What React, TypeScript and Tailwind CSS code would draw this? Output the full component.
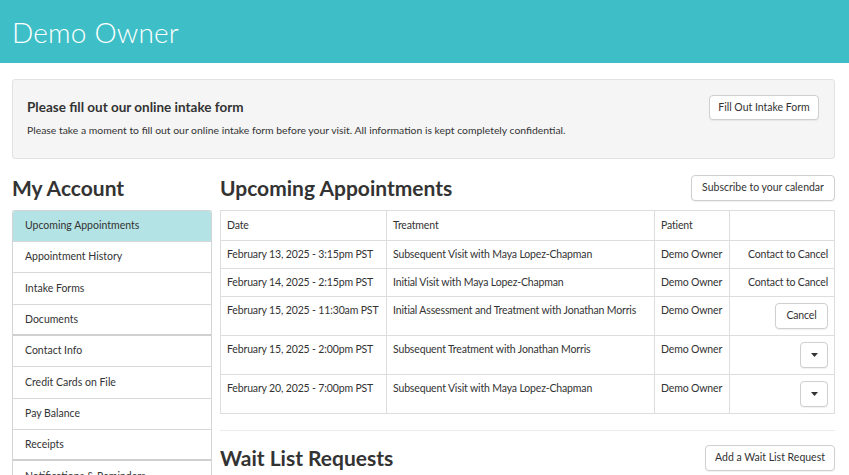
const menu = [
  { label: "Upcoming Appointments", active: true },
  { label: "Appointment History" },
  { label: "Intake Forms" },
  { label: "Documents", group: true },
  { label: "Contact Info" },
  { label: "Credit Cards on File" },
  { label: "Pay Balance" },
  { label: "Receipts", group: true },
  { label: "Notifications & Reminders" },
];

type Row = { date: string; treatment: string; action: "contact" | "cancel" | "menu" };

const rows: Row[] = [
  { date: "February 13, 2025 - 3:15pm PST", treatment: "Subsequent Visit with Maya Lopez-Chapman", action: "contact" },
  { date: "February 14, 2025 - 2:15pm PST", treatment: "Initial Visit with Maya Lopez-Chapman", action: "contact" },
  { date: "February 15, 2025 - 11:30am PST", treatment: "Initial Assessment and Treatment with Jonathan Morris", action: "cancel" },
  { date: "February 15, 2025 - 2:00pm PST", treatment: "Subsequent Treatment with Jonathan Morris", action: "menu" },
  { date: "February 20, 2025 - 7:00pm PST", treatment: "Subsequent Visit with Maya Lopez-Chapman", action: "menu" },
];

const btn =
  "rounded-[4px] border border-[#cfcfcf] bg-white text-[10.5px] text-[#333] shadow-[0_1px_1px_rgba(0,0,0,0.06)] whitespace-nowrap";

const cell = "border border-[#ddd] px-[6px] align-top whitespace-nowrap";

const ActionCell = ({ action }: { action: Row["action"] }) => {
  if (action === "contact") return <span className="block text-right">Contact to Cancel</span>;
  if (action === "cancel")
    return (
      <div className="flex justify-end">
        <button className={`${btn} h-[26px] w-[53px]`}>Cancel</button>
      </div>
    );
  return (
    <div className="flex justify-end">
      <button className={`${btn} flex h-[26px] w-[28px] items-center justify-center`}>
        <svg width="7" height="4" viewBox="0 0 7 4">
          <path d="M0 0h7L3.5 4z" fill="#333" />
        </svg>
      </button>
    </div>
  );
};

export default function App() {
  return (
    <div className="h-[475px] overflow-hidden bg-white text-[#333]" style={{ fontFamily: "Lato, 'Open Sans', sans-serif" }}>
      <header className="flex h-[63px] items-center bg-[#3ebfc7] pl-3">
        <h1 className="text-[28px] font-light tracking-[0.2px] text-white">Demo Owner</h1>
      </header>

      <div className="pl-3 pr-[14px] pt-4">
        <div className="flex items-start justify-between rounded-[3px] border border-[#e2e2e2] bg-[#f5f5f5] pl-[14px] pr-[15px] pt-[15px] pb-[19px]">
          <div className="pt-[2px]">
            <h2 className="text-[13.5px] font-bold text-[#333]">Please fill out our online intake form</h2>
            <p className="mt-[6px] text-[10.4px] text-[#333]">
              Please take a moment to fill out our online intake form before your visit. All information is kept completely confidential.
            </p>
          </div>
          <button className={`${btn} h-[25px] w-[110px]`}>Fill Out Intake Form</button>
        </div>

        <div className="mt-[16px] flex gap-2">
          <aside className="w-[200px] shrink-0">
            <h2 className="h-[31px] text-[21px] font-bold leading-[26px] text-[#333]">My Account</h2>
            <ul className="mt-[4px] overflow-hidden rounded-t-[3px] border border-b-0 border-[#d4d4d4]">
              {menu.map((m) => (
                <li
                  key={m.label}
                  className={`flex h-[31.3px] items-center px-3 text-[10.5px] text-[#333] ${
                    m.group ? "border-b-2 border-[#d0d0d0]" : "border-b border-[#d8d8d8]"
                  } ${m.active ? "bg-[#b3e3e4]" : "bg-white"}`}
                >
                  {m.label}
                </li>
              ))}
            </ul>
          </aside>

          <main className="min-w-0 flex-1">
            <div className="flex h-[35px] items-start justify-between">
              <h2 className="text-[21px] font-bold leading-[26px] text-[#333]">Upcoming Appointments</h2>
              <button className={`${btn} h-[26px] w-[144px]`}>Subscribe to your calendar</button>
            </div>

            <table className="w-full table-fixed border-collapse text-[10.5px] leading-[13px] tracking-[-0.15px] text-[#333]">
              <colgroup>
                <col className="w-[166px]" />
                <col className="w-[268px]" />
                <col className="w-[75px]" />
                <col />
              </colgroup>
              <thead>
                <tr>
                  <th className={`${cell} py-[8px] text-left font-normal`}>Date</th>
                  <th className={`${cell} py-[8px] text-left font-normal`}>Treatment</th>
                  <th className={`${cell} py-[8px] text-left font-normal`}>Patient</th>
                  <th className={`${cell} py-[8px]`} />
                </tr>
              </thead>
              <tbody>
                {rows.map((r) => (
                  <tr key={r.date}>
                    <td className={`${cell} py-[7px]`}>{r.date}</td>
                    <td className={`${cell} py-[7px]`}>{r.treatment}</td>
                    <td className={`${cell} py-[7px]`}>Demo Owner</td>
                    <td className={`${cell} ${r.action === "contact" ? "py-[7px]" : "py-[6px]"}`}>
                      <ActionCell action={r.action} />
                    </td>
                  </tr>
                ))}
              </tbody>
            </table>

            <div className="mt-4 border-t border-[#ececec]" />

            <div className="mt-[14px] flex items-center justify-between">
              <h2 className="text-[21px] font-bold leading-[26px] text-[#333]">Wait List Requests</h2>
              <button className={`${btn} h-[26px] w-[130px]`}>Add a Wait List Request</button>
            </div>
          </main>
        </div>
      </div>
    </div>
  );
}
